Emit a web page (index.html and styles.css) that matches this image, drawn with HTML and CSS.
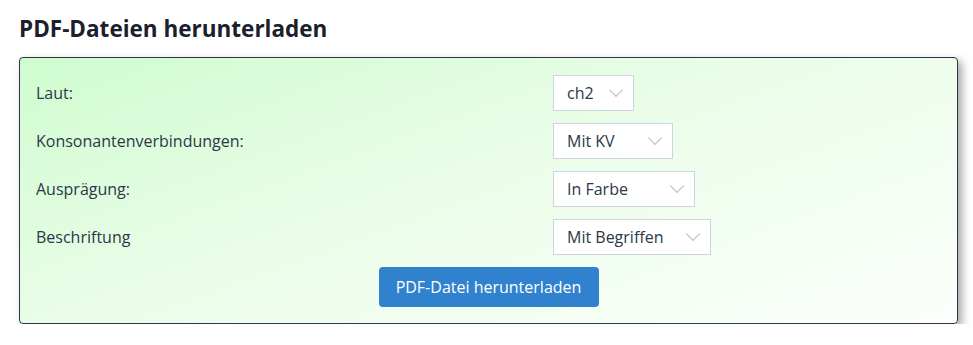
FILE: index.html
```html
<!DOCTYPE html>
<html lang="de">
<head>
    <meta charset="UTF-8">
    <meta name="viewport" content="width=device-width, initial-scale=1.0">
    <title>PDF-Dateien herunterladen</title>
    <link rel="stylesheet" href="styles.css">
</head>
<body>
    <div class="container">
        <h2>PDF-Dateien herunterladen</h2>

        <div class="download-box">
            <div class="form-grid">
                <label for="laut">Laut:</label>
                <div class="select-wrap">
                    <select id="laut" class="select-laut">
                        <option>ch2</option>
                    </select>
                </div>

                <label for="kv">Konsonantenverbindungen:</label>
                <div class="select-wrap">
                    <select id="kv" class="select-kv">
                        <option>Mit KV</option>
                    </select>
                </div>

                <label for="auspraegung">Ausprägung:</label>
                <div class="select-wrap">
                    <select id="auspraegung" class="select-farbe">
                        <option>In Farbe</option>
                    </select>
                </div>

                <label for="beschriftung">Beschriftung</label>
                <div class="select-wrap">
                    <select id="beschriftung" class="select-begriffe">
                        <option>Mit Begriffen</option>
                    </select>
                </div>
            </div>

            <div class="actions">
                <button class="download-btn">PDF-Datei herunterladen</button>
            </div>
        </div>
    </div>
</body>
</html>
```

FILE: styles.css
```css
/* Reset */
* {
    margin: 0;
    padding: 0;
    box-sizing: border-box;
}

body {
    font-family: 'Open Sans', 'Noto Sans', sans-serif;
    color: #1a202c;
    background: white;
}

.container {
    padding: 14px 15px 0 19px;
}

h2 {
    font-family: 'Open Sans', sans-serif;
    font-size: 22.5px;
    font-weight: bold;
    line-height: 30px;
    margin-bottom: 13px;
    color: #1a202c;
}

/* Download box */
.download-box {
    border: 1px solid #2d3748;
    border-radius: 4px;
    background: linear-gradient(160deg, #cffccf 0%, #ecfdea 50%, #fcfffc 100%);
    box-shadow: 4px 4px 9px rgba(0, 0, 0, 0.35);
    padding: 17px 16px 16px 16px;
}

.form-grid {
    display: grid;
    grid-template-columns: 517px auto;
    row-gap: 12px;
    align-items: center;
}

.form-grid label {
    font-size: 16px;
    color: #2d3748;
}

.select-wrap {
    position: relative;
    display: inline-block;
    justify-self: start;
}

.select-wrap::after {
    content: '';
    position: absolute;
    right: 13px;
    top: 10px;
    width: 9px;
    height: 9px;
    border-right: 1.5px solid #b4bec9;
    border-bottom: 1.5px solid #b4bec9;
    transform: rotate(45deg);
    pointer-events: none;
}

select {
    appearance: none;
    -webkit-appearance: none;
    font-family: inherit;
    font-size: 16px;
    color: #2d3748;
    background: white;
    border: 1px solid #cbd5e0;
    border-radius: 0;
    height: 36px;
    padding: 0 13px;
}

.select-laut { width: 81px; }
.select-kv { width: 120px; }
.select-farbe { width: 142px; }
.select-begriffe { width: 158px; }

.actions {
    display: flex;
    justify-content: center;
    margin-top: 12px;
}

.download-btn {
    background-color: #3182ce;
    color: white;
    border: none;
    border-radius: 4px;
    font-family: inherit;
    font-size: 16px;
    height: 40px;
    width: 220px;
}
```
